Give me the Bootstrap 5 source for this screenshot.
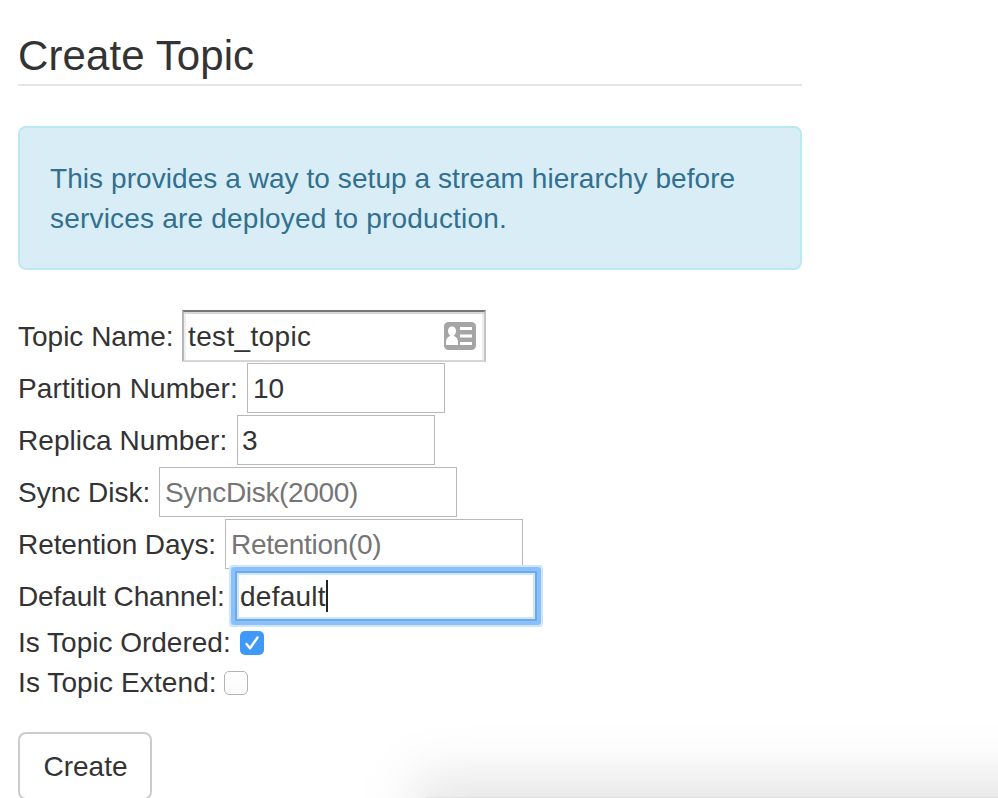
<!DOCTYPE html>
<html lang="en">
<head>
<meta charset="utf-8">
<meta name="viewport" content="width=device-width, initial-scale=1">
<title>Create Topic</title>
<link href="https://cdn.jsdelivr.net/npm/bootstrap@5.3.0/dist/css/bootstrap.min.css" rel="stylesheet">
<style>
body{font-family:"Liberation Sans",Arial,sans-serif;font-size:28px;line-height:40px;color:#333;background:#fff;height:798px}
.page{width:784px;height:798px;margin-left:18px;padding-top:32px}
.page-title{font-size:42px;line-height:48px;font-weight:400;height:54px;border-bottom:2px solid #e5e5e5;margin-bottom:40px;letter-spacing:.1px}
.page-title span,.line span,.field-label,.field-value,.btn span{white-space:nowrap}
.info-box{height:144px;padding:31px 30px 29px;border:2px solid #bce8f1;border-radius:8px;background:#d9edf7;color:#31708f;margin-bottom:40px}
.line{letter-spacing:.065px}
.line + .line{letter-spacing:.2px}
.field-row{height:52px}
.check-row{height:40px}
.field-label,.field-value{flex:none;padding-top:2px}
.field-box{height:50px;width:198px;border:1px solid #b9b9b9;background:#fff;padding:0 5px}
.wide{width:298px}
.inset-box{width:304px;height:52px;border:2px solid;border-color:#767676 #c3c3c3 #d6d6d6 #b8b8b8;box-shadow:inset 0 2px #d8d8d8,inset 2px 0 #eee,inset -2px 0 #eee;padding:0 4px}
.inset-box .field-value{letter-spacing:.35px}
.focused{width:302px;height:50px;padding:0 3px;border:2px solid #6ea9e8;border-radius:1px;box-shadow:inset 0 0 0 2px #cfe5fe,0 0 0 4px #8bc1fb,0 0 0 6px #cfe5fe;z-index:1}
.focused .field-value{letter-spacing:.25px}
.hint{color:#757575;letter-spacing:-.33px}
.caret{width:2px;height:32px;background:#222}
.tick{width:24px;height:24px;border-radius:5px;background:#3f99f8;margin-top:2px}
.tick-off{background:linear-gradient(#fff,#fafafa);border:1.5px solid #b4b4b4}
.btn-create{width:134px;height:68px;border:2px solid #ccc;border-radius:8px;font-size:28px;line-height:40px;color:#333;padding:13px 0 11px 1px;margin-top:30px;background:#fff}
.n1{width:164px}.n2{width:229px;letter-spacing:.12px}.n3{width:219px;letter-spacing:.05px}.n4{width:141px}.n5{width:207px;letter-spacing:-.08px}.n6{width:217px;letter-spacing:-.12px}.n7{width:222px}.n8{width:206px;letter-spacing:.1px}
.shadow-clip{right:0;bottom:0;width:698px;height:128px;overflow:hidden;pointer-events:none}
.shadow-shape{margin:106px -150px -200px 116px;height:300px;background:rgba(0,0,0,.102);filter:blur(26px)}
.shadow-edge{right:0;bottom:0;width:572px;height:1px;background:rgba(0,0,0,.04)}
</style>
<script src="https://cdn.jsdelivr.net/npm/bootstrap@5.3.0/dist/js/bootstrap.bundle.min.js"></script>
</head>
<body class="overflow-hidden position-relative">
<main class="page overflow-hidden">
  <h1 class="page-title"><span>Create Topic</span></h1>
  <div class="info-box">
    <div class="line"><span>This provides a way to setup a stream hierarchy before</span></div>
    <div class="line"><span>services are deployed to production.</span></div>
  </div>
  <form>
    <div class="field-row d-flex align-items-center"><div class="field-label n1"><span>Topic Name:</span></div>
      <div class="field-box inset-box d-flex align-items-center justify-content-between"><span class="field-value">test_topic</span>
        <svg class="me-1" width="32" height="28" viewBox="0 0 32 28"><rect width="32" height="28" rx="4.500" fill="#a5a5a5"/><path d="M8 4.500c2.500 0 4 1.900 4 4.400 0 1.900-.9 3.400-1.900 4.300v.9c2.500 1 3.900 3 3.900 6V23H2v-2.900c0-3 1.400-5 3.900-6v-.9C4.900 12.300 4 10.800 4 8.900 4 6.400 5.500 4.500 8 4.500zM16 5h12v3H16zM16 12.500h12v3H16zM16 20h12v3H16z" fill="#fff"/></svg>
      </div></div>
    <div class="field-row d-flex align-items-center"><div class="field-label n2"><span>Partition Number:</span></div><div class="field-box d-flex align-items-center"><span class="field-value">10</span></div></div>
    <div class="field-row d-flex align-items-center"><div class="field-label n3"><span>Replica Number:</span></div><div class="field-box d-flex align-items-center ps-1"><span class="field-value">3</span></div></div>
    <div class="field-row d-flex align-items-center"><div class="field-label n4"><span>Sync Disk:</span></div><div class="field-box wide d-flex align-items-center"><span class="field-value hint">SyncDisk(2000)</span></div></div>
    <div class="field-row d-flex align-items-center"><div class="field-label n5"><span>Retention Days:</span></div><div class="field-box wide d-flex align-items-center"><span class="field-value hint">Retention(0)</span></div></div>
    <div class="field-row d-flex align-items-center"><div class="field-label n6"><span>Default Channel:</span></div><div class="field-box focused d-flex align-items-center"><span class="field-value">default</span><i class="caret"></i></div></div>
    <div class="check-row d-flex align-items-center"><div class="field-label n7"><span>Is Topic Ordered:</span></div>
      <div class="tick d-flex"><svg width="24" height="24" viewBox="0 0 24 24" fill="none" stroke="#fff" stroke-width="2.400" stroke-linecap="round" stroke-linejoin="round"><path d="M6.500 13l3.500 4.300L17.500 6.500"/></svg></div></div>
    <div class="check-row d-flex align-items-center"><div class="field-label n8"><span>Is Topic Extend:</span></div><div class="tick tick-off"></div></div>
    <button type="button" class="btn btn-create"><span>Create</span></button>
  </form>
</main>
<div class="shadow-clip position-absolute"><div class="shadow-shape"></div></div>
<div class="shadow-edge position-absolute"></div>
</body>
</html>
